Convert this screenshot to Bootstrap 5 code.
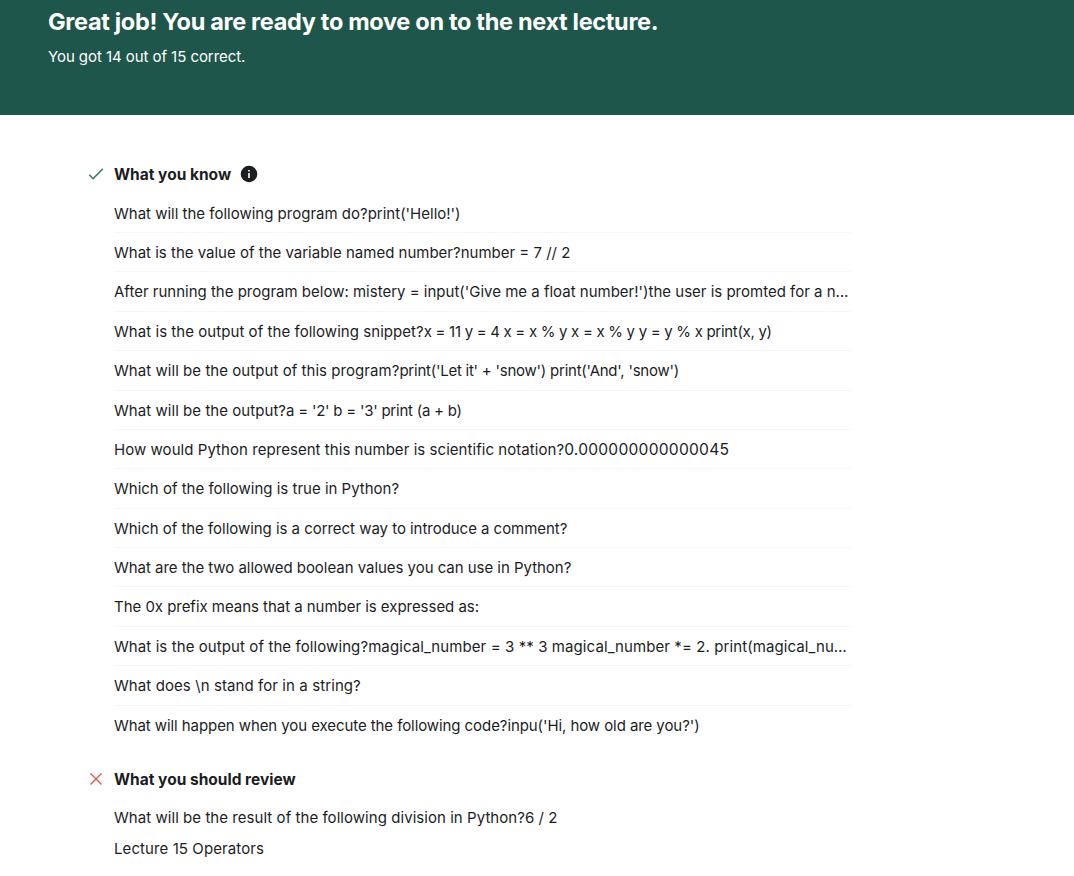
<!DOCTYPE html>
<html lang="en">
<head>
<meta charset="utf-8">
<meta name="viewport" content="width=device-width, initial-scale=1">
<title>Quiz results</title>
<link href="https://cdn.jsdelivr.net/npm/bootstrap@5.3.0/dist/css/bootstrap.min.css" rel="stylesheet">
<style>
body{font-family:Inter,"Liberation Sans",sans-serif;font-size:15px;line-height:22px;color:#1c1d1f;background:#fff}
.result-banner{background:#1e564b;height:115px;padding:6px 48px 0}
.result-banner h1{font-size:23.5px;line-height:32px;letter-spacing:-.32px}
.result-banner p{letter-spacing:-.06px}
.results{padding:48px 0 0 88px;width:850px}
.section-title{font-size:15.5px;line-height:22px;padding-top:1px}
.status-icon{width:16px;height:16px;margin:0 10px 1px 0}
.info-icon{width:18px;height:18px;margin:0 0 1px 9px}
.question-list{margin:7.65px 0 0 26px}
.question-list li{height:39.38px;line-height:39.38px;border-bottom:1px solid #f5f6f7}
.question-list li:last-child{border-bottom:0}
.review{margin-top:23px}
.review-items{margin:16px 0 0 26px}
.review-items p+p{margin-top:9px}
.tight{letter-spacing:-.035px}
.tighter{letter-spacing:-.08px}
.loose{letter-spacing:.05px}
.wide{letter-spacing:.09px}
.snippet{letter-spacing:-.24px}
.assignments{letter-spacing:-.3px}
.digits{font-size:15.6px;letter-spacing:.24px}
</style>
</head>
<body>
<header class="result-banner text-white">
  <h1 class="fw-bold mb-2">Great job! You are ready to move on to the next lecture.</h1>
  <p class="mb-0">You got 14 out of 15 correct.</p>
</header>
<main class="results">
  <section>
    <div class="d-flex align-items-center">
      <svg class="status-icon" viewBox="0 0 16 16" fill="none" stroke="#368273" stroke-width="1.5" aria-hidden="true"><path d="M1.2 8.7 5.1 12.6 14.8 2.9"/></svg>
      <h2 class="section-title fw-bold mb-0">What you know</h2>
      <svg class="info-icon" viewBox="0 0 18 18" aria-hidden="true"><circle cx="9" cy="9" r="8.3" fill="#1c1d1f"/><path d="M8.2 5h1.6v1.6H8.2zM8.2 8h1.6v5H8.2z" fill="#fff"/></svg>
    </div>
    <ul class="question-list list-unstyled mb-0">
      <li class="text-truncate">What will the following program do?print('Hello!')</li>
      <li class="text-truncate">What is the value of the variable named number?number = 7 // 2</li>
      <li class="text-truncate">After running the program below: mistery = input('Give me a float number!')the user is promted for a n…</li>
      <li class="text-truncate loose">What is the output of the following snippet?<span class="assignments">x = 11 y = 4 x = x % y x = x % y y = y % x print(x, y)</span></li>
      <li class="text-truncate loose">What will be the output of this program?<span class="snippet">print('Let it' + 'snow') print('And', 'snow')</span></li>
      <li class="text-truncate loose">What will be the output?<span class="snippet">a = '2' b = '3' print (a + b)</span></li>
      <li class="text-truncate loose">How would Python represent this number is scientific notation?<span class="digits">0.000000000000045</span></li>
      <li class="text-truncate">Which of the following is true in Python?</li>
      <li class="text-truncate tight">Which of the following is a correct way to introduce a comment?</li>
      <li class="text-truncate tight">What are the two allowed boolean values you can use in Python?</li>
      <li class="text-truncate tight">The 0x prefix means that a number is expressed as:</li>
      <li class="text-truncate wide">What is the output of the following?magical_number = 3 ** 3 magical_number *= 2. print(magical_nu…</li>
      <li class="text-truncate wide">What does \n stand for in a string?</li>
      <li class="text-truncate tighter">What will happen when you execute the following code?inpu('Hi, how old are you?')</li>
    </ul>
  </section>
  <section class="review">
    <div class="d-flex align-items-center">
      <svg class="status-icon" viewBox="0 0 16 16" fill="none" stroke="#cc5c49" stroke-width="1.4" aria-hidden="true"><path d="m2.5 2.5 11 11m0-11-11 11"/></svg>
      <h2 class="section-title fw-bold mb-0">What you should review</h2>
    </div>
    <div class="review-items">
      <p class="mb-0 loose">What will be the result of the following division in Python?6 / 2</p>
      <p class="mb-0 wide">Lecture 15 Operators</p>
    </div>
  </section>
</main>
<script src="https://cdn.jsdelivr.net/npm/bootstrap@5.3.0/dist/js/bootstrap.bundle.min.js"></script>
</body>
</html>
